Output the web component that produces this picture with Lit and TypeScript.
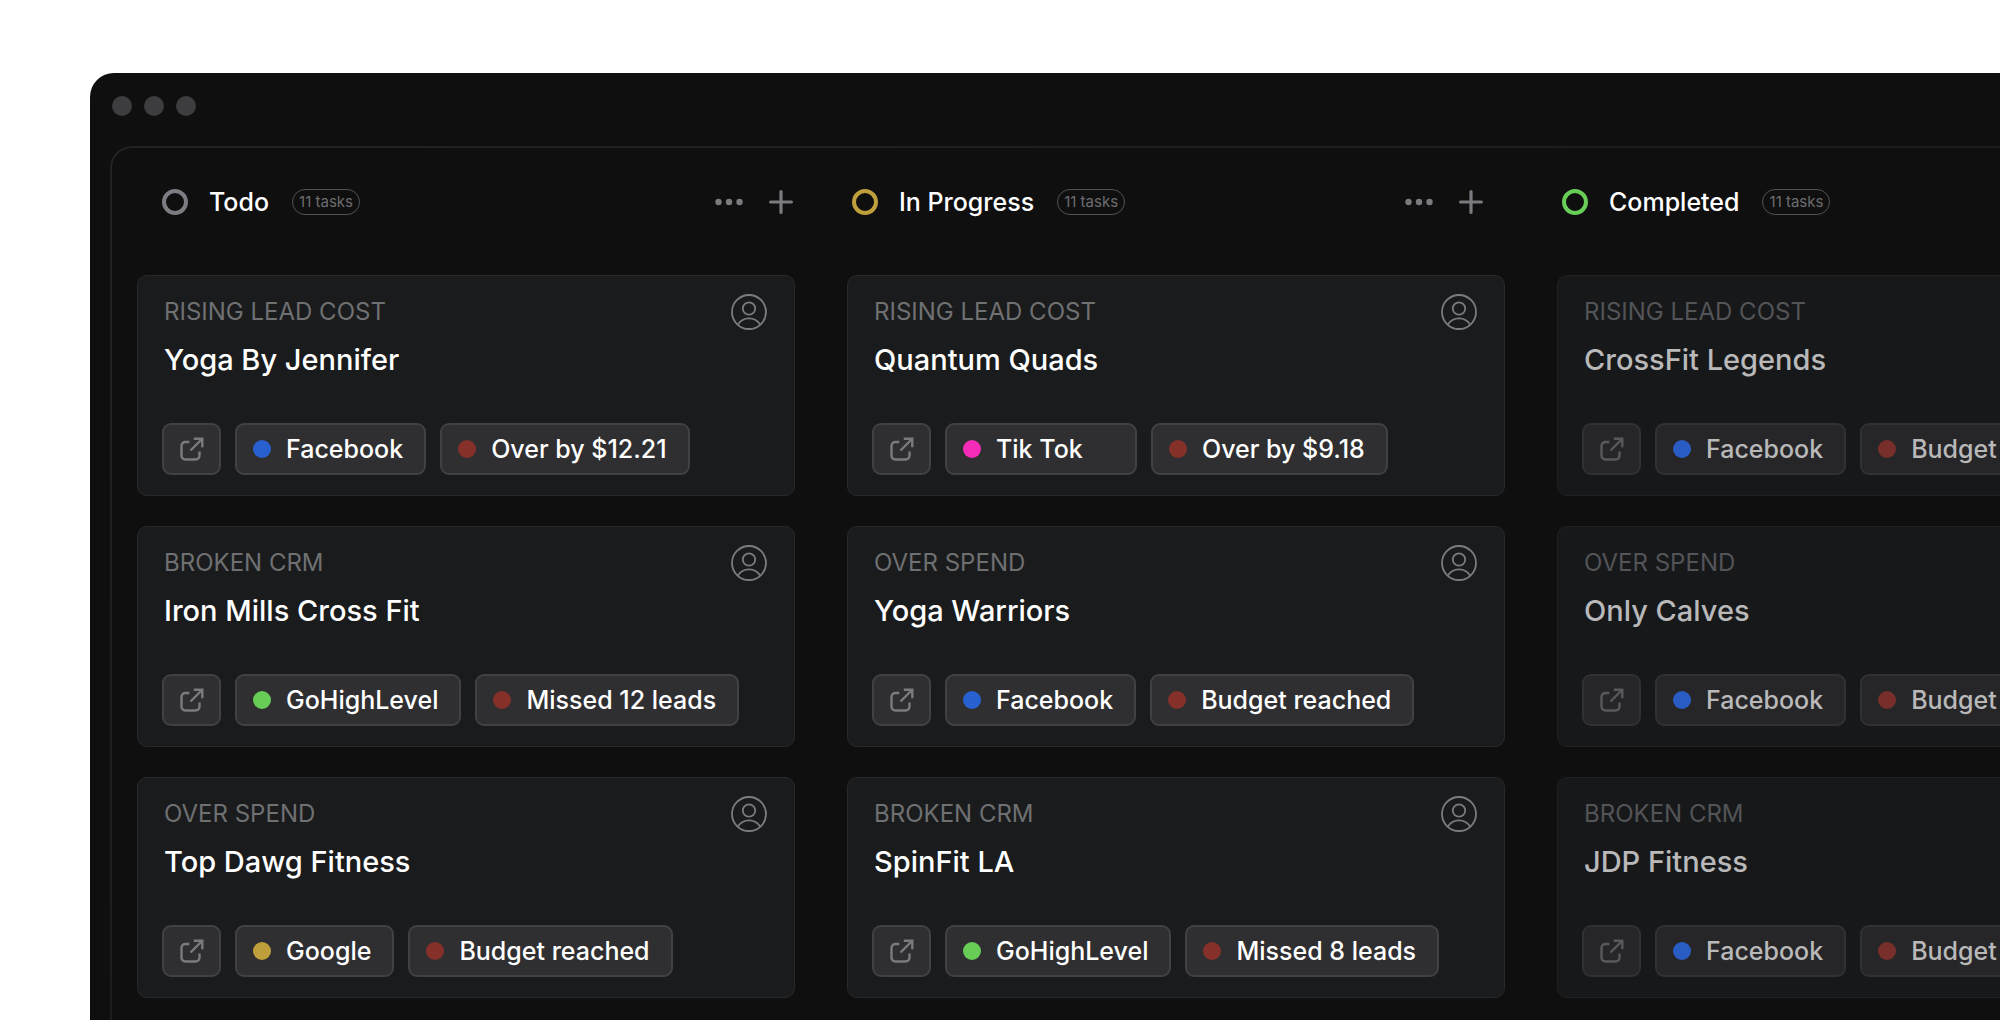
import { LitElement, html, css, svg } from "lit";
import { customElement, property } from "lit/decorators.js";
import { classMap } from "lit/directives/class-map.js";

type Tone = "blue" | "pink" | "green" | "gold" | "red";

interface Task {
  issue: string;
  client: string;
  source: string;
  tone: Tone;
  alert: string;
  wide?: boolean;
}

interface Column {
  name: string;
  count: string;
  status: "todo" | "progress" | "done";
  tasks: Task[];
}

const COLUMNS: Column[] = [
  {
    name: "Todo",
    count: "11 tasks",
    status: "todo",
    tasks: [
      { issue: "RISING LEAD COST", client: "Yoga By Jennifer", source: "Facebook", tone: "blue", alert: "Over by $12.21" },
      { issue: "BROKEN CRM", client: "Iron Mills Cross Fit", source: "GoHighLevel", tone: "green", alert: "Missed 12 leads" },
      { issue: "OVER SPEND", client: "Top Dawg Fitness", source: "Google", tone: "gold", alert: "Budget reached" },
    ],
  },
  {
    name: "In Progress",
    count: "11 tasks",
    status: "progress",
    tasks: [
      { issue: "RISING LEAD COST", client: "Quantum Quads", source: "Tik Tok", tone: "pink", alert: "Over by $9.18", wide: true },
      { issue: "OVER SPEND", client: "Yoga Warriors", source: "Facebook", tone: "blue", alert: "Budget reached" },
      { issue: "BROKEN CRM", client: "SpinFit LA", source: "GoHighLevel", tone: "green", alert: "Missed 8 leads" },
    ],
  },
  {
    name: "Completed",
    count: "11 tasks",
    status: "done",
    tasks: [
      { issue: "RISING LEAD COST", client: "CrossFit Legends", source: "Facebook", tone: "blue", alert: "Budget reached" },
      { issue: "OVER SPEND", client: "Only Calves", source: "Facebook", tone: "blue", alert: "Budget reached" },
      { issue: "BROKEN CRM", client: "JDP Fitness", source: "Facebook", tone: "blue", alert: "Budget reached" },
    ],
  },
];

const moreIcon = svg`<circle cx="3.5" cy="13" r="3.2" /><circle cx="14" cy="13" r="3.2" /><circle cx="24.5" cy="13" r="3.2" />`;

@customElement("task-card")
export class TaskCard extends LitElement {
  @property({ attribute: false }) task!: Task;
  @property({ type: Boolean }) muted = false;

  static styles = css`
    :host {
      display: block;
    }
    .card {
      box-sizing: border-box;
      padding: 18px 27px 20px 24px;
      border: 1px solid #28292b;
      border-radius: 10px;
      background: #1a1b1c;
      color: #fff;
    }
    .head {
      display: flex;
      align-items: center;
      justify-content: space-between;
      padding-left: 2px;
    }
    .issue {
      margin: 0;
      font-size: 24px;
      font-weight: 400;
      line-height: 36px;
      color: #6f7072;
    }
    .avatar {
      display: block;
      width: 36px;
      height: 36px;
      fill: none;
      stroke: #7b7c7f;
      stroke-width: 1.8;
    }
    .client {
      margin: 12px 0 45px;
      padding-left: 2px;
      font-size: 29px;
      font-weight: 500;
      line-height: 36px;
    }
    .chips {
      display: flex;
      gap: 14px;
      white-space: nowrap;
    }
    .chip {
      box-sizing: border-box;
      display: flex;
      align-items: center;
      gap: 15px;
      height: 52px;
      padding: 0 21px 0 16px;
      border: 2px solid #404143;
      border-radius: 9px;
      background: #2f2f31;
      font-size: 25px;
      font-weight: 500;
      line-height: 32px;
    }
    .wide {
      min-width: 192px;
    }
    .open {
      justify-content: center;
      width: 59px;
      padding: 0;
      cursor: pointer;
    }
    .open-icon {
      width: 26px;
      height: 26px;
      fill: none;
      stroke: #7b7b7d;
      stroke-width: 2.4;
    }
    .dot {
      width: 18px;
      height: 18px;
      border-radius: 50%;
    }
    .blue {
      background: #2860cf;
    }
    .pink {
      background: #f52cb8;
    }
    .green {
      background: #67cd56;
    }
    .gold {
      background: #bf9f3c;
    }
    .red {
      background: #86302a;
    }
    .muted {
      background: #17181a;
      border-color: #202123;
      color: #b9b9ba;
    }
    .muted .issue {
      color: #535457;
    }
    .muted .avatar {
      stroke: #5c5d5f;
    }
    .muted .chip {
      border-color: #303133;
      background: #262628;
    }
    .muted .open-icon {
      stroke: #59595b;
    }
    .muted .blue {
      background: #2a5dc4;
    }
    .muted .red {
      background: #782f2b;
    }
  `;

  render() {
    const t = this.task;
    return html`
      <article class=${classMap({ card: true, muted: this.muted })}>
        <div class="head">
          <p class="issue">${t.issue}</p>
          <svg class="avatar" viewBox="0 0 36 36" aria-hidden="true">
            <circle cx="18" cy="18" r="17" />
            <circle cx="18" cy="14.5" r="6.2" />
            <path d="M6.8 30.6a13.2 13.2 0 0 1 22.4 0" />
          </svg>
        </div>
        <h3 class="client">${t.client}</h3>
        <div class="chips">
          <button class="chip open" type="button" aria-label="Open">
            <svg class="open-icon" viewBox="0 0 26 26" aria-hidden="true">
              <path d="M10.3 6H6.4A3.9 3.9 0 0 0 2.5 9.9V19.6A3.9 3.9 0 0 0 6.4 23.5H16.6A3.9 3.9 0 0 0 20.5 19.6V15.5" />
              <path d="M11.5 14.5L23 3M14.8 2.7H23.3V11.2" />
            </svg>
          </button>
          <span class=${classMap({ chip: true, wide: !!t.wide })}><i class="dot ${t.tone}"></i>${t.source}</span>
          <span class="chip"><i class="dot red"></i>${t.alert}</span>
        </div>
      </article>
    `;
  }
}

@customElement("board-column")
export class BoardColumn extends LitElement {
  @property({ attribute: false }) column!: Column;

  static styles = css`
    :host {
      display: block;
    }
    .header {
      display: flex;
      align-items: center;
      height: 26px;
      margin-bottom: 60px;
      padding: 0 22px 0 5px;
    }
    .header.todo {
      padding: 0 2px 0 25px;
    }
    .ring {
      box-sizing: border-box;
      width: 26px;
      height: 26px;
      border: 4px solid #7c7d82;
      border-radius: 50%;
    }
    .progress .ring {
      border-color: #bf9f3c;
    }
    .done .ring {
      border-color: #67cd56;
    }
    .name {
      margin: 0 23px 0 21px;
      font-size: 25px;
      font-weight: 500;
      line-height: 26px;
      color: #fff;
      white-space: nowrap;
    }
    .count {
      box-sizing: border-box;
      min-width: 68px;
      padding: 0 5px;
      border: 1px solid #515254;
      border-radius: 13px;
      font-size: 15px;
      line-height: 24px;
      text-align: center;
      color: #6c6d70;
      white-space: nowrap;
    }
    .actions {
      display: flex;
      gap: 26px;
      margin-left: auto;
    }
    .action {
      display: block;
      padding: 0;
      border: 0;
      background: none;
      cursor: pointer;
    }
    .icon {
      display: block;
      height: 26px;
    }
    .more {
      width: 28px;
      fill: #7b7b7f;
    }
    .plus {
      width: 24px;
      fill: none;
      stroke: #7b7b7f;
      stroke-width: 3.2;
      stroke-linecap: round;
    }
    .cards {
      display: flex;
      flex-direction: column;
      gap: 30px;
    }
  `;

  render() {
    const c = this.column;
    return html`
      <section>
        <header class="header ${c.status}">
          <span class="ring"></span>
          <h2 class="name">${c.name}</h2>
          <span class="count">${c.count}</span>
          <div class="actions">
            <button class="action" type="button" aria-label="More">
              <svg class="icon more" viewBox="0 0 28 26" aria-hidden="true">${moreIcon}</svg>
            </button>
            <button class="action" type="button" aria-label="Add task">
              <svg class="icon plus" viewBox="0 0 24 26" aria-hidden="true"><path d="M12 2.6V23.4M1.6 13H22.4" /></svg>
            </button>
          </div>
        </header>
        <div class="cards">
          ${c.tasks.map((t) => html`<task-card .task=${t} ?muted=${c.status === "done"}></task-card>`)}
        </div>
      </section>
    `;
  }
}

@customElement("app-root")
export class AppRoot extends LitElement {
  static styles = css`
    :host {
      box-sizing: border-box;
      display: flex;
      min-height: 100vh;
      padding: 73px 0 0 90px;
      overflow: hidden;
      background: #fff;
      font-family: Inter, "Liberation Sans", sans-serif;
    }
    .window {
      flex: 1;
      min-width: 0;
      display: flex;
      flex-direction: column;
      border-top-left-radius: 24px;
      background: #0f0f0f;
      overflow: hidden;
    }
    .titlebar {
      display: flex;
      align-items: center;
      gap: 12px;
      padding: 23px 22px 30px;
    }
    .light {
      width: 20px;
      height: 20px;
      border-radius: 50%;
      background: #3d3d3f;
    }
    .panel {
      flex: 1;
      margin-left: 20px;
      padding: 41px 0 22px 25px;
      border: 2px solid transparent;
      border-width: 2px 0 0 2px;
      border-top-left-radius: 22px;
      background:
        linear-gradient(#0f0f0f, #0f0f0f) padding-box,
        linear-gradient(150deg, #222324, #161617) border-box;
      overflow: hidden;
    }
    .board {
      display: grid;
      grid-auto-flow: column;
      grid-auto-columns: calc((100vw - 26px) / 3);
      gap: 52px;
    }
  `;

  render() {
    return html`
      <main class="window">
        <div class="titlebar">
          <span class="light"></span>
          <span class="light"></span>
          <span class="light"></span>
        </div>
        <div class="panel">
          <div class="board">
            ${COLUMNS.map((c) => html`<board-column .column=${c}></board-column>`)}
          </div>
        </div>
      </main>
    `;
  }
}
